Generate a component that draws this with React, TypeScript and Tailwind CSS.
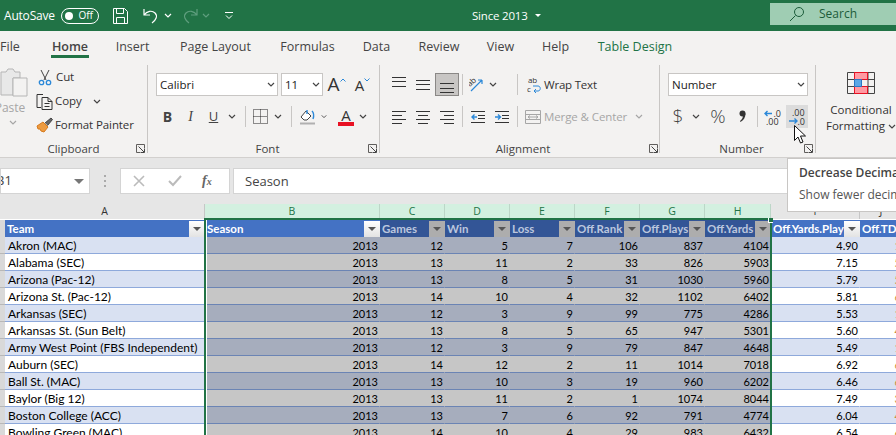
import type { ReactNode } from "react";

const ui = "font-['Open_Sans','Noto_Sans',sans-serif]";

const rows: [string, string, string, string, string, string, string, string, string, string][] = [
  ["Akron (MAC)", "2013", "12", "5", "7", "106", "837", "4104", "4.90", "1"],
  ["Alabama (SEC)", "2013", "13", "11", "2", "33", "826", "5903", "7.15", "5"],
  ["Arizona (Pac-12)", "2013", "13", "8", "5", "31", "1030", "5960", "5.79", "5"],
  ["Arizona St. (Pac-12)", "2013", "14", "10", "4", "32", "1102", "6402", "5.81", "6"],
  ["Arkansas (SEC)", "2013", "12", "3", "9", "99", "775", "4286", "5.53", "1"],
  ["Arkansas St. (Sun Belt)", "2013", "13", "8", "5", "65", "947", "5301", "5.60", "4"],
  ["Army West Point (FBS Independent)", "2013", "12", "3", "9", "79", "847", "4648", "5.49", "1"],
  ["Auburn (SEC)", "2013", "14", "12", "2", "11", "1014", "7018", "6.92", "6"],
  ["Ball St. (MAC)", "2013", "13", "10", "3", "19", "960", "6202", "6.46", "6"],
  ["Baylor (Big 12)", "2013", "13", "11", "2", "1", "1074", "8044", "7.49", "3"],
  ["Boston College (ACC)", "2013", "13", "7", "6", "92", "791", "4774", "6.04", "4"],
  ["Bowling Green (MAC)", "2013", "14", "10", "4", "29", "983", "6432", "6.54", "6"],
];

const headers = ["Team", "Season", "Games", "Win", "Loss", "Off.Rank", "Off.Plays", "Off.Yards", "Off.Yards.Play", "Off.TDs"];
const letters = ["A", "B", "C", "D", "E", "F", "G", "H", "I", "J"];
const gridCols = "grid grid-cols-[5px_200px_175px_65px_65px_65px_65px_65px_66px_89px_43px]";

function Chev({ color = "#444" }: { color?: string }) {
  return (
    <svg width="8" height="5" viewBox="0 0 8 5" fill="none">
      <path d="M1 1l3 3 3-3" stroke={color} strokeWidth="1.2" />
    </svg>
  );
}

function Launcher({ className = "right-[2px]" }: { className?: string }) {
  return (
    <svg width="9" height="9" viewBox="0 0 9 9" fill="none" className={`absolute bottom-[4px] ${className}`}>
      <path d="M8.5 4V.5H.5v8H4" stroke="#605e5c" />
      <path d="M2.5 2.5l5.5 5.5M8.5 4.5v4h-4" stroke="#444" />
    </svg>
  );
}

function Slot({ w, children, className = "" }: { w: string; children?: ReactNode; className?: string }) {
  return <div className={`${w} h-full flex items-center justify-center shrink-0 ${className}`}>{children}</div>;
}

function VSep() {
  return <div className="w-px h-[21px] bg-[#c8c6c4]" />;
}

function Lines({ ys, xs }: { ys: number[]; xs: [number, number][] }) {
  return (
    <svg width="16" height="16" viewBox="0 0 16 16" fill="none" stroke="#333" strokeWidth="1">
      {ys.map((y, i) => (
        <path key={y} d={`M${xs[i][0]} ${y + 0.5}H${xs[i][1]}`} />
      ))}
    </svg>
  );
}

function Indent({ flip }: { flip?: boolean }) {
  return (
    <svg width="16" height="16" viewBox="0 0 16 16" fill="none">
      <path d="M1 2.5h14M8 6.5h7M8 9.5h7M1 13.5h14" stroke="#333" />
      {flip ? (
        <path d="M1 8h5M4 5.5L6.5 8 4 10.5" stroke="#2b88d8" strokeWidth="1.4" />
      ) : (
        <path d="M7 8H2M4.5 5.5L2 8l2.5 2.5" stroke="#2b88d8" strokeWidth="1.4" />
      )}
    </svg>
  );
}

function Combo({ w, label }: { w: string; label: string }) {
  return (
    <div className={`${w} h-[23px] bg-white border border-[#c8c6c4] flex items-center justify-between pl-[3px] pr-[2px] text-[11.5px] text-[#222] shrink-0`}>
      <span>{label}</span>
      <Chev />
    </div>
  );
}

function Group({ w, label, launcher, className = "", children }: { w: string; label?: string; launcher?: boolean; className?: string; children: ReactNode }) {
  return (
    <div className={`${w} relative h-full pt-[11px] shrink-0 flex flex-col ${className}`}>
      <div className="flex-1 min-h-0">{children}</div>
      {label && <div className="h-[16px] leading-[16px] text-center text-[11.5px] text-[#444]">{label}</div>}
      {launcher && <Launcher />}
    </div>
  );
}

function RibbonSep() {
  return <div className="w-px h-[88px] mt-[3px] bg-[#c8c6c4] shrink-0" />;
}

function TitleBar() {
  return (
    <div className="h-[31px] bg-[#217346] flex items-center text-white text-[12px] relative">
      <span className="ml-[4px] w-[50px] tracking-[-0.2px] whitespace-nowrap">AutoSave</span>
      <div className="ml-[7px] w-[38px] h-[16px] rounded-full border border-white flex items-center justify-between pl-[3px] pr-[5px] text-[10px]">
        <span className="w-[8px] h-[8px] rounded-full bg-white" />
        <span>Off</span>
      </div>
      <svg width="17" height="18" viewBox="0 0 17 18" fill="none" stroke="#fff" className="ml-[13px]">
        <path d="M1.5 1.5h11l3 3v12h-14zM4.5 1.5v5h7v-5M4.5 16.5v-6h8v6" />
      </svg>
      <svg width="18" height="18" viewBox="0 0 18 18" fill="none" stroke="#fff" strokeWidth="1.2" className="ml-[13px]">
        <path d="M2 2v6h6M2 8c3-4 8-5 11-2 3 3 1 7-3 10" />
      </svg>
      <div className="ml-[4px]"><Chev color="#fff" /></div>
      <svg width="18" height="18" viewBox="0 0 18 18" fill="none" stroke="#5f9e7e" strokeWidth="1.2" className="ml-[9px]">
        <path d="M16 2v6h-6M16 8c-3-4-8-5-11-2-3 3-1 7 3 10" />
      </svg>
      <div className="ml-[3px]"><Chev color="#5f9e7e" /></div>
      <svg width="8" height="8" viewBox="0 0 8 8" fill="none" stroke="#fff" className="ml-[15px]">
        <path d="M0 .5h8M1 3.5l3 3 3-3" />
      </svg>
      <span className="ml-[239px] text-[11.5px] tracking-[-0.2px] whitespace-nowrap">Since 2013</span>
      <span className="ml-[7px] w-0 h-0 border-x-[3.5px] border-x-transparent border-t-[3.5px] border-t-white" />
      <div className="absolute left-[770px] top-[3px] w-[126px] h-[22px] bg-[#9fcdb3] flex items-center text-[#1c5c3a] text-[12px]">
        <svg width="16" height="16" viewBox="0 0 16 16" fill="none" stroke="#1c5c3a" className="ml-[19px]">
          <circle cx="10" cy="6" r="4.5" />
          <path d="M6.5 9.5L1 15" />
        </svg>
        <span className="ml-[14px]">Search</span>
      </div>
    </div>
  );
}

const tabs: [string, string, string][] = [
  ["File", "w-[18px] ml-[1px]", ""],
  ["Home", "w-[38px] ml-[32px]", "font-semibold border-b-[3px] border-[#217346]"],
  ["Insert", "w-[33px] ml-[27px]", ""],
  ["Page Layout", "w-[71px] ml-[31px]", ""],
  ["Formulas", "w-[53px] ml-[30px]", ""],
  ["Data", "w-[27px] ml-[29px]", ""],
  ["Review", "w-[40px] ml-[29px]", ""],
  ["View", "w-[27px] ml-[28px]", ""],
  ["Help", "w-[27px] ml-[28px]", ""],
  ["Table Design", "w-[76px] ml-[28px]", "text-[#217346]"],
];

function Tabs() {
  return (
    <div className="h-[31px] bg-[#f3f2f1] flex text-[12.5px] text-[#444] whitespace-nowrap">
      {tabs.map(([label, w, extra]) => (
        <div key={label} className={`${w} h-[27px] pt-[7px] leading-[17px] flex justify-center shrink-0 ${extra}`}>
          {label}
        </div>
      ))}
    </div>
  );
}

function Clipboard() {
  return (
    <Group w="w-[147px]" label="Clipboard" launcher>
      <div className="flex -mt-[6px] h-[80px]">
        <div className="w-[30px] flex flex-col items-center shrink-0 text-[#a6a6a6] text-[12px]">
          <svg width="28" height="30" viewBox="0 0 28 30" fill="none" className="-ml-[3px]">
            <path d="M1 5h5l2-3h5l2 3h5v6h-7v17H1z" fill="#e8e8e8" stroke="#b5b5b5" />
            <path d="M13 11h14v18H13z" fill="#f3f2f1" stroke="#b5b5b5" />
          </svg>
          <span className="-ml-[10px] mt-[3px] leading-[16px]">Paste</span>
          <div className="mt-[4px] -ml-[4px]"><Chev color="#a6a6a6" /></div>
        </div>
        <div className="pl-[6px] text-[11.5px] tracking-[-0.1px] text-[#333] -mt-[2px]">
          <div className="h-[24px] flex items-center">
            <svg width="14" height="17" viewBox="0 0 14 17" fill="none" className="mr-[4px] ml-[2px]">
              <path d="M3 1l5 10M11 1L6 11" stroke="#444" />
              <circle cx="3.5" cy="13.5" r="2.2" stroke="#2b88d8" strokeWidth="1.3" />
              <circle cx="10.5" cy="13.5" r="2.2" stroke="#2b88d8" strokeWidth="1.3" />
            </svg>
            Cut
          </div>
          <div className="h-[24px] flex items-center">
            <svg width="17" height="17" viewBox="0 0 17 17" fill="none" stroke="#333" className="mr-[2px]">
              <path d="M1 1.5h6M1 1.5v13h4M6 4.5h6l4 4v8H6zM12 4.5v4h4M8.5 10.5h5M8.5 13.5h5" />
            </svg>
            Copy
            <div className="ml-[11px]"><Chev /></div>
          </div>
          <div className="h-[24px] flex items-center whitespace-nowrap">
            <svg width="17" height="16" viewBox="0 0 17 16" fill="none" className="mr-[2px]">
              <path d="M1 9l6-4 5 5-4 5-3-1-1-2-2 0z" fill="#ed9b40" stroke="#d67a1d" />
              <path d="M9 6l6-5 1.5 1.5-5 6" fill="#666" stroke="#444" />
            </svg>
            Format Painter
          </div>
        </div>
      </div>
    </Group>
  );
}

function FontGroup() {
  return (
    <Group w="w-[231px]" label="Font" launcher className="pl-[8px]">
      <div className="flex h-[23px] items-center">
        <Combo w="w-[122px]" label="Calibri" />
        <Combo w="w-[42px] ml-[3px]" label="11" />
        <Slot w="w-[27px]">
          <span className="text-[19px] text-[#333] leading-none">A</span>
          <svg width="6" height="4" viewBox="0 0 6 4" fill="none" stroke="#2b88d8" className="mb-[9px]"><path d="M.5 3.5L3 1l2.5 2.5" /></svg>
        </Slot>
        <Slot w="w-[25px]">
          <span className="text-[15px] text-[#333] leading-none mt-[2px]">A</span>
          <svg width="6" height="4" viewBox="0 0 6 4" fill="none" stroke="#2b88d8" className="mb-[9px]"><path d="M.5.5L3 3l2.5-2.5" /></svg>
        </Slot>
      </div>
      <div className="flex h-[23px] mt-[9px] items-center text-[#444]">
        <Slot w="w-[23px]"><span className="font-bold text-[14px]">B</span></Slot>
        <Slot w="w-[23px]"><span className="italic text-[14px] font-['Liberation_Serif',serif]">I</span></Slot>
        <Slot w="w-[23px]"><span className="underline text-[13px]">U</span></Slot>
        <Slot w="w-[14px]"><Chev /></Slot>
        <Slot w="w-[12px]"><VSep /></Slot>
        <Slot w="w-[18px]">
          <svg width="15" height="15" viewBox="0 0 15 15" fill="none" stroke="#222" strokeDasharray="1 1">
            <path d="M.5.5h14v14H.5zM7.5.5v14M.5 7.5h14" />
          </svg>
        </Slot>
        <Slot w="w-[18px]"><Chev /></Slot>
        <Slot w="w-[8px]"><VSep /></Slot>
        <Slot w="w-[26px]">
          <svg width="16" height="18" viewBox="0 0 16 18" fill="none">
            <path d="M1 9l5-6 5 5-4 4H4z" stroke="#444" fill="#fff" />
            <path d="M7 2v4M12 3c2 2 2 5 1 8" stroke="#2b88d8" strokeWidth="1.4" />
            <path d="M0 15.5h15" stroke="#b0b0b0" strokeWidth="2" />
          </svg>
        </Slot>
        <Slot w="w-[6px]"><Chev /></Slot>
        <Slot w="w-[20px]" className="ml-[9px] flex-col">
          <span className="text-[15px] leading-[14px] text-[#333]">A</span>
          <span className="w-[16px] h-[4px] bg-[#e81123]" />
        </Slot>
        <Slot w="w-[14px]"><Chev /></Slot>
      </div>
    </Group>
  );
}

function Alignment() {
  return (
    <Group w="w-[279px]" label="Alignment" className="pl-[7px]">
      <div className="flex h-[23px] items-center text-[11.5px] tracking-[-0.2px]">
        <Slot w="w-[24px]"><Lines ys={[0, 4, 9]} xs={[[1, 15], [1, 15], [1, 15]]} /></Slot>
        <Slot w="w-[24px]"><Lines ys={[3, 7, 12]} xs={[[1, 15], [1, 15], [1, 15]]} /></Slot>
        <Slot w="w-[24px]" className="bg-[#c8c6c4] border border-[#8a8886]"><Lines ys={[6, 11, 15]} xs={[[1, 15], [1, 15], [1, 15]]} /></Slot>
        <Slot w="w-[6px]"><VSep /></Slot>
        <Slot w="w-[24px]">
          <svg width="16" height="17" viewBox="0 0 16 17" fill="none">
            <path d="M2 15L13 4M13 4H9M13 4v4" stroke="#2b88d8" strokeWidth="1.2" />
            <text x="0" y="9" fontSize="8" fill="#333" transform="rotate(-40 3 9)">ab</text>
          </svg>
        </Slot>
        <Slot w="w-[8px]"><Chev /></Slot>
        <Slot w="w-[8px]" className="ml-[16px]"><VSep /></Slot>
        <svg width="14" height="16" viewBox="0 0 14 16" fill="none" className="ml-[6px]">
          <path d="M6 9h5c3 0 3 5 0 5H7M9 12l-2 2 2 2" stroke="#2b88d8" />
          <text x="1" y="6" fontSize="8" fill="#333">ab</text>
          <text x="0" y="15" fontSize="8" fill="#333">c</text>
        </svg>
        <span className="ml-[3px] text-[#333]">Wrap Text</span>
      </div>
      <div className="flex h-[23px] mt-[9px] items-center text-[11.5px] tracking-[-0.1px]">
        <Slot w="w-[24px]"><Lines ys={[2, 6, 10, 14]} xs={[[1, 15], [1, 11], [1, 15], [1, 11]]} /></Slot>
        <Slot w="w-[24px]"><Lines ys={[2, 6, 10, 14]} xs={[[1, 15], [3, 13], [1, 15], [3, 13]]} /></Slot>
        <Slot w="w-[24px]"><Lines ys={[2, 6, 10, 14]} xs={[[1, 15], [5, 15], [1, 15], [5, 15]]} /></Slot>
        <Slot w="w-[6px]"><VSep /></Slot>
        <Slot w="w-[25px]"><Indent /></Slot>
        <Slot w="w-[24px]"><Indent flip /></Slot>
        <Slot w="w-[6px]"><VSep /></Slot>
        <svg width="16" height="14" viewBox="0 0 16 14" fill="none" stroke="#a6a6a6" className="ml-[5px]">
          <path d="M.5.5h15v13H.5zM.5 4.5h15M.5 9.5h15M3 7h10M5 5.5L3 7l2 1.5M11 5.5L13 7l-2 1.5" />
        </svg>
        <span className="ml-[3px] text-[#a6a6a6] whitespace-nowrap">Merge &amp; Center</span>
        <div className="ml-[8px]"><Chev color="#a6a6a6" /></div>
      </div>
      <Launcher className="left-[269px]" />
    </Group>
  );
}

function NumberGroup() {
  return (
    <Group w="w-[155px]" label="Number" launcher className="pl-[8px]">
      <Combo w="w-[140px]" label="Number" />
      <div className="flex h-[23px] mt-[9px] items-center text-[#444]">
        <Slot w="w-[20px]"><span className="text-[19px] font-light">$</span></Slot>
        <Slot w="w-[16px]"><Chev /></Slot>
        <Slot w="w-[28px]"><span className="text-[19px] font-light">%</span></Slot>
        <Slot w="w-[20px]">
          <svg width="7" height="13" viewBox="0 0 7 13" fill="#333">
            <circle cx="3.5" cy="3.5" r="3" />
            <path d="M6.5 3.5c0 4-2 7-5 8.5l-.5-1c2-1.500 3-3 3-6z" />
          </svg>
        </Slot>
        <Slot w="w-[10px]"><VSep /></Slot>
        <Slot w="w-[22px]">
          <svg width="18" height="16" viewBox="0 0 18 16" fill="none">
            <path d="M8 4.5H1M3.5 2L1 4.5 3.500 7" stroke="#2b88d8" strokeWidth="1.4" />
            <text x="9.500" y="7.500" fontSize="9" fill="#333">.0</text>
            <text x="2" y="15.500" fontSize="9" fill="#333">.00</text>
          </svg>
        </Slot>
        <Slot w="w-[22px]" className="ml-[2px] bg-[#dcdcdc]">
          <svg width="18" height="16" viewBox="0 0 18 16" fill="none">
            <text x="4" y="7" fontSize="9" fill="#333">.00</text>
            <path d="M1 12h8M6.500 9.500L9 12l-2.500 2.500" stroke="#2b88d8" strokeWidth="1.4" />
            <text x="9.500" y="15.500" fontSize="9" fill="#333">.0</text>
          </svg>
        </Slot>
      </div>
    </Group>
  );
}

function CondFormat() {
  return (
    <div className="flex-1 pt-[10px] flex flex-col items-center pl-[10px] text-[11.5px] text-[#333] leading-[16px] whitespace-nowrap">
      <svg width="28" height="22" viewBox="0 0 28 22" fill="none">
        <path d="M.5.5h27v21H.5zM.5 7.500h27M.5 14.500h27M7.500.5v21M14.500.5v21M21 .5v21" stroke="#444" />
        <path d="M7.500.5h13v7h-13zM7.500 14.500h13v7h-13z" fill="#ff9aa2" stroke="#e81123" />
        <path d="M7.500 7.500h7v7h-7z" fill="#5ba7e6" stroke="#2b78c5" />
      </svg>
      <span className="mt-[8px]">Conditional</span>
      <span className="flex items-center">Formatting<span className="ml-[3px]"><Chev /></span></span>
    </div>
  );
}

function Ribbon() {
  return (
    <div className="h-[96px] bg-[#f3f2f1] border-b border-[#d2d0ce] flex overflow-hidden">
      <Clipboard />
      <RibbonSep />
      <FontGroup />
      <RibbonSep />
      <Alignment />
      <RibbonSep />
      <NumberGroup />
      <RibbonSep />
      <CondFormat />
    </div>
  );
}

function FormulaBar() {
  return (
    <div className="h-[46px] bg-[#e6e6e6] pt-[10px] flex items-start">
      <div className="w-[90px] h-[26px] bg-white border border-[#d4d4d4] flex items-center justify-between pr-[5px] text-[13px] text-[#444] overflow-hidden">
        <span className="-ml-[5px]">B1</span>
        <span className="w-0 h-0 border-x-[5px] border-x-transparent border-t-[5px] border-t-[#777]" />
      </div>
      <div className="w-[30px] h-[26px] flex flex-col items-center justify-center gap-[3px]">
        <span className="w-[2px] h-[2px] bg-[#aaa]" />
        <span className="w-[2px] h-[2px] bg-[#aaa]" />
        <span className="w-[2px] h-[2px] bg-[#aaa]" />
      </div>
      <div className="w-[110px] h-[26px] bg-white border border-[#d4d4d4] flex items-center">
        <svg width="12" height="12" viewBox="0 0 12 12" fill="none" stroke="#bbb" strokeWidth="1.6" className="ml-[12px]">
          <path d="M1 1l10 10M11 1L1 11" />
        </svg>
        <svg width="14" height="12" viewBox="0 0 14 12" fill="none" stroke="#bbb" strokeWidth="2" className="ml-[23px]">
          <path d="M1 6l4 4 8-9" />
        </svg>
        <span className="ml-[20px] text-[14px] font-bold italic text-[#666] font-['Liberation_Serif',serif] leading-none">f<span className="text-[10px]">x</span></span>
      </div>
      <div className="flex-1 ml-[3px] h-[26px] pt-px bg-white border border-[#d4d4d4] flex items-center pl-[11px] text-[13px] text-[#444]">Season</div>
    </div>
  );
}

function FilterBtn({ kind }: { kind: "white" | "gray" }) {
  const face = kind === "white" ? "bg-gradient-to-b from-white to-[#e3e3e3]" : "bg-[#adadad]";
  return (
    <div className={`w-[16px] h-[16px] shrink-0 flex items-center justify-center ${face}`}>
      <span className="w-0 h-0 border-x-[4px] border-x-transparent border-t-[4px] border-t-[#555]" />
    </div>
  );
}

function Sheet() {
  return (
    <div className="relative font-['Lato',sans-serif] text-[11px]">
      {/* column letters */}
      <div className={`${gridCols} h-[15px] bg-[#e6e6e6]`}>
        <div />
        {letters.map((l, i) => {
          const on = i >= 1 && i <= 7;
          return (
            <div key={l} className={`text-center leading-[15px] font-['Open_Sans',sans-serif] text-[10.5px] border-r ${on ? "bg-[#d3f0e0] text-[#217346] border-[#bcd6c7]" : "text-[#333] border-[#c6c6c6]"}`}>
              {l}
            </div>
          );
        })}
      </div>
      {/* header row */}
      <div className={`${gridCols} h-[18px] pt-px`}>
        <div className="bg-[#d9d9d9]" />
        {headers.map((h, i) => {
          const on = i >= 2 && i <= 7;
          return (
            <div key={h} className={`flex items-center pl-[2px] text-[11.5px] leading-[18px] font-bold overflow-hidden whitespace-nowrap ${on ? "bg-[#335596] text-[#bcc7de]" : "bg-[#4472c4] text-white"}`}>
              <span className="flex-1 overflow-hidden">{h}</span>
              {i !== 9 && <FilterBtn kind={on ? "gray" : "white"} />}
            </div>
          );
        })}
      </div>
      {/* data */}
      {rows.map((r, ri) => {
        const odd = ri % 2 === 0;
        return (
          <div key={r[0]} className={`${gridCols} h-[17px]`}>
            <div className="bg-[#d9d9d9] border-b border-[#b8b8b8]" />
            {r.map((c, i) => {
              const on = i >= 1 && i <= 7;
              const fill = on
                ? odd ? "bg-[#a6adbd] border-b-[#6b84b4]" : "bg-[#c6c6c6] border-b-[#6b84b4] border-r-[#adadad]"
                : odd ? "bg-[#d9e1f2] border-b-[#8ea9db]" : "bg-white border-b-[#8ea9db] border-r-[#d4d4d4]";
              return (
                <div key={i} className={`h-[17px] leading-[17px] border-b border-r border-r-transparent whitespace-nowrap overflow-hidden ${i === 0 ? "text-left pl-[3px] text-[12px]" : "text-right pr-[1px]"} ${i === 9 ? "text-[#c98a3a]" : "text-black"} ${fill}`}>
                  {c}
                </div>
              );
            })}
          </div>
        );
      })}
      {/* selection outline, runs off the bottom of the window */}
      <div className="absolute left-[204px] top-[14px] w-[568px] h-[300px] border-2 border-[#217346]">
        <div className="absolute inset-y-0 left-0 w-px bg-white" />
        <div className="absolute -right-[3px] -top-[2px] w-[5px] h-[5px] bg-[#217346] border-l border-b border-white" />
      </div>
    </div>
  );
}

export default function App() {
  return (
    <div className={`w-[896px] h-[435px] overflow-hidden relative bg-white ${ui}`}>
      <TitleBar />
      <Tabs />
      <Ribbon />
      <FormulaBar />
      <Sheet />
      {/* hover tooltip */}
      <div className="absolute left-[787px] top-[158px] w-[200px] h-[54px] bg-white border border-[#c8c6c4] pl-[11px] pt-[5px] text-[12px] text-[#444] whitespace-nowrap">
        <div className="font-semibold leading-[17px]">Decrease Decimal</div>
        <div className="mt-[5px] leading-[17px] text-[#555]">Show fewer decimal places</div>
      </div>
      {/* mouse pointer */}
      <svg width="13" height="19" viewBox="0 0 13 19" className="absolute left-[794px] top-[125px]">
        <path d="M.5.5v15l3.500-3.500 2.500 6 2.500-1-2.500-6h5z" fill="#fff" stroke="#111" />
      </svg>
    </div>
  );
}
